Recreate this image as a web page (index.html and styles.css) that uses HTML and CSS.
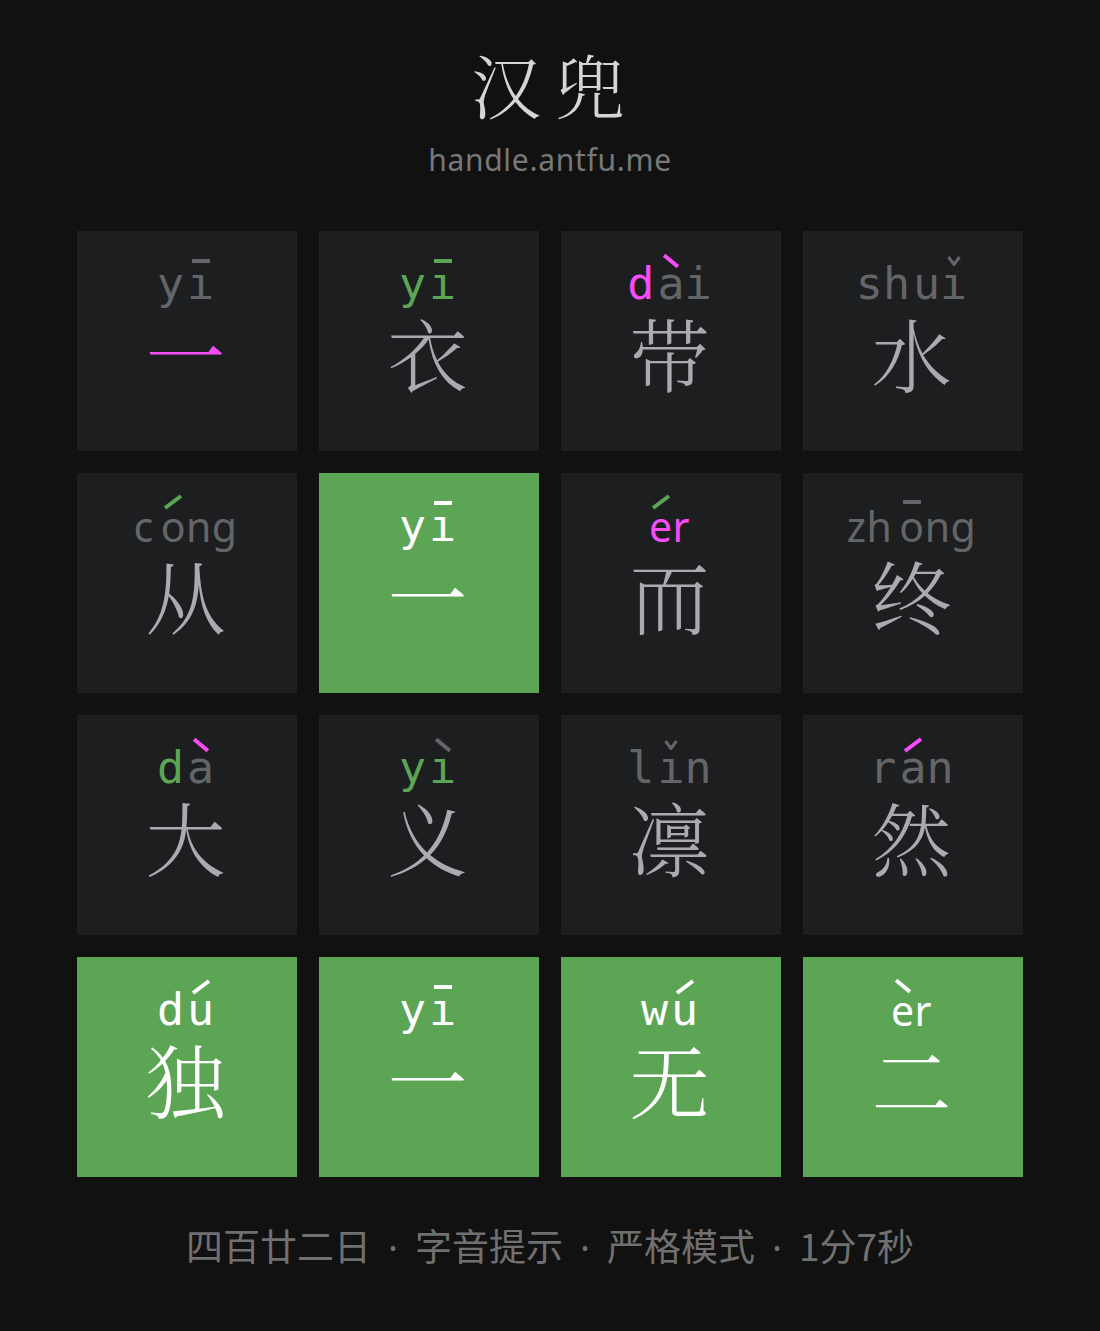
FILE: index.html
```html
<!DOCTYPE html>
<html lang="zh-CN">
<head>
<meta charset="utf-8">
<title>汉兜</title>
<link rel="stylesheet" href="styles.css">
</head>
<body>
<div class="page">
  <h1 class="title"><span>汉</span><span>兜</span></h1>
  <div class="sub">handle.antfu.me</div>

  <div class="grid">
    <!-- row 1 -->
    <div class="tile">
      <div class="py"><span class="ini">y</span><span class="v">ı<i class="tone t1"></i></span></div>
      <div class="ch p">一</div>
    </div>
    <div class="tile">
      <div class="py"><span class="ini g">y</span><span class="v g">ı<i class="tone t1 tg"></i></span></div>
      <div class="ch">衣</div>
    </div>
    <div class="tile">
      <div class="py"><span class="ini p">d</span><span class="v">a<i class="tone t4 tp"></i></span>i</div>
      <div class="ch">带</div>
    </div>
    <div class="tile">
      <div class="py"><span class="ini">sh</span>u<span class="v">ı<i class="tone t3"><svg viewBox="0 0 14 10" width="14" height="10"><polyline points="1.5,1 7,8.5 12.5,1" fill="none" stroke="currentColor" stroke-width="3"/></svg></i></span></div>
      <div class="ch">水</div>
    </div>

    <!-- row 2 -->
    <div class="tile">
      <div class="py sans"><span class="ini">c</span><span class="v">o<i class="tone t2 tg"></i></span>ng</div>
      <div class="ch">从</div>
    </div>
    <div class="tile ok">
      <div class="py"><span class="ini">y</span><span class="v">ı<i class="tone t1"></i></span></div>
      <div class="ch">一</div>
    </div>
    <div class="tile">
      <div class="py sans"><span class="v p">e<i class="tone t2 tg"></i></span><span class="p">r</span></div>
      <div class="ch">而</div>
    </div>
    <div class="tile">
      <div class="py sans"><span class="ini">zh</span><span class="v">o<i class="tone t1"></i></span>ng</div>
      <div class="ch">终</div>
    </div>

    <!-- row 3 -->
    <div class="tile">
      <div class="py"><span class="ini g">d</span><span class="v">a<i class="tone t4 tp"></i></span></div>
      <div class="ch">大</div>
    </div>
    <div class="tile">
      <div class="py"><span class="ini g">y</span><span class="v g">ı<i class="tone t4 tn"></i></span></div>
      <div class="ch">义</div>
    </div>
    <div class="tile">
      <div class="py"><span class="ini">l</span><span class="v">ı<i class="tone t3"><svg viewBox="0 0 14 10" width="14" height="10"><polyline points="1.5,1 7,8.5 12.5,1" fill="none" stroke="currentColor" stroke-width="3"/></svg></i></span>n</div>
      <div class="ch">凛</div>
    </div>
    <div class="tile">
      <div class="py"><span class="ini">r</span><span class="v">a<i class="tone t2 tp"></i></span>n</div>
      <div class="ch">然</div>
    </div>

    <!-- row 4 -->
    <div class="tile ok">
      <div class="py"><span class="ini">d</span><span class="v">u<i class="tone t2"></i></span></div>
      <div class="ch">独</div>
    </div>
    <div class="tile ok">
      <div class="py"><span class="ini">y</span><span class="v">ı<i class="tone t1"></i></span></div>
      <div class="ch">一</div>
    </div>
    <div class="tile ok">
      <div class="py"><span class="ini">w</span><span class="v">u<i class="tone t2"></i></span></div>
      <div class="ch">无</div>
    </div>
    <div class="tile ok">
      <div class="py sans"><span class="v">e<i class="tone t4"></i></span>r</div>
      <div class="ch">二</div>
    </div>
  </div>

  <div class="footer">四百廿二日<span class="dot">·</span>字音提示<span class="dot">·</span>严格模式<span class="dot">·</span>1分7秒</div>
</div>
</body>
</html>
```
FILE: styles.css
```css
html, body {
  margin: 0;
  background: #111111;
}

body {
  font-family: "Noto Sans", "Noto Sans CJK SC", sans-serif;
}

.page {
  display: flex;
  flex-direction: column;
  align-items: center;
  padding-top: 44px;
}

.title {
  margin: 0 4px 0 0;
  display: flex;
  gap: 14px;
  font-family: "Noto Serif CJK SC", "Noto Sans CJK SC", serif;
  font-weight: 300;
  font-size: 70px;
  line-height: 80px;
  color: #d4d5d9;
}

.sub {
  margin-top: 18px;
  font-family: "Noto Sans", sans-serif;
  font-size: 30px;
  line-height: 36px;
  letter-spacing: 0.7px;
  color: #77787a;
}

.grid {
  margin-top: 53px;
  display: grid;
  grid-template-columns: repeat(4, 220px);
  grid-auto-rows: 220px;
  gap: 22px;
}

.tile {
  background: #1d1e20;
  display: flex;
  flex-direction: column;
  align-items: center;
  padding-top: 25px;
  box-sizing: border-box;
  color: #646568;
}

.tile.ok {
  background: #5ca555;
  color: #ffffff;
}

.py {
  height: 56px;
  line-height: 56px;
  font-family: "DejaVu Sans Mono", monospace;
  font-size: 45px;
  white-space: nowrap;
  margin-right: 3px;
}

.py.sans {
  font-family: "Noto Sans", sans-serif;
  font-size: 41px;
  letter-spacing: 0.5px;
}

.ini {
  margin-right: 3px;
}

.py.sans .ini {
  margin-right: 7px;
}

.v {
  position: relative;
}

.g { color: #5ca555; }
.p { color: #f84cf8; }

.tone {
  position: absolute;
  left: 50%;
  top: 4px;
  width: 18px;
  height: 4px;
  margin-left: -9px;
  margin-top: -2px;
  background: currentColor;
}

.py.sans .tone {
  top: 4px;
}

.tone.t2 {
  width: 20px;
  margin-left: -10px;
  transform: rotate(-37deg);
}

.tone.t4 {
  width: 18px;
  transform: rotate(40deg);
}

.tone.t3 {
  width: 14px;
  height: 10px;
  margin-left: -7px;
  margin-top: -5px;
  background: none;
}

.tone.t3 svg {
  display: block;
}

.tone.tg { color: #5ca555; }
.tone.tp { color: #f84cf8; }
.tone.tn { color: #646568; }

.ch {
  font-family: "Noto Serif CJK SC", "Noto Sans CJK SC", serif;
  font-weight: 300;
  font-size: 80px;
  line-height: 80px;
  color: #a9abaf;
  margin-right: 3px;
}

.ch.p { color: #f84cf8; }

.tile.ok .ch { color: #ffffff; }

.footer {
  margin-top: 44px;
  font-family: "Noto Sans CJK SC", sans-serif;
  font-size: 37px;
  line-height: 48px;
  color: #707070;
  white-space: nowrap;
}

.dot {
  display: inline-block;
  width: 44px;
  text-align: center;
  font-family: "Noto Sans", sans-serif;
}
```
